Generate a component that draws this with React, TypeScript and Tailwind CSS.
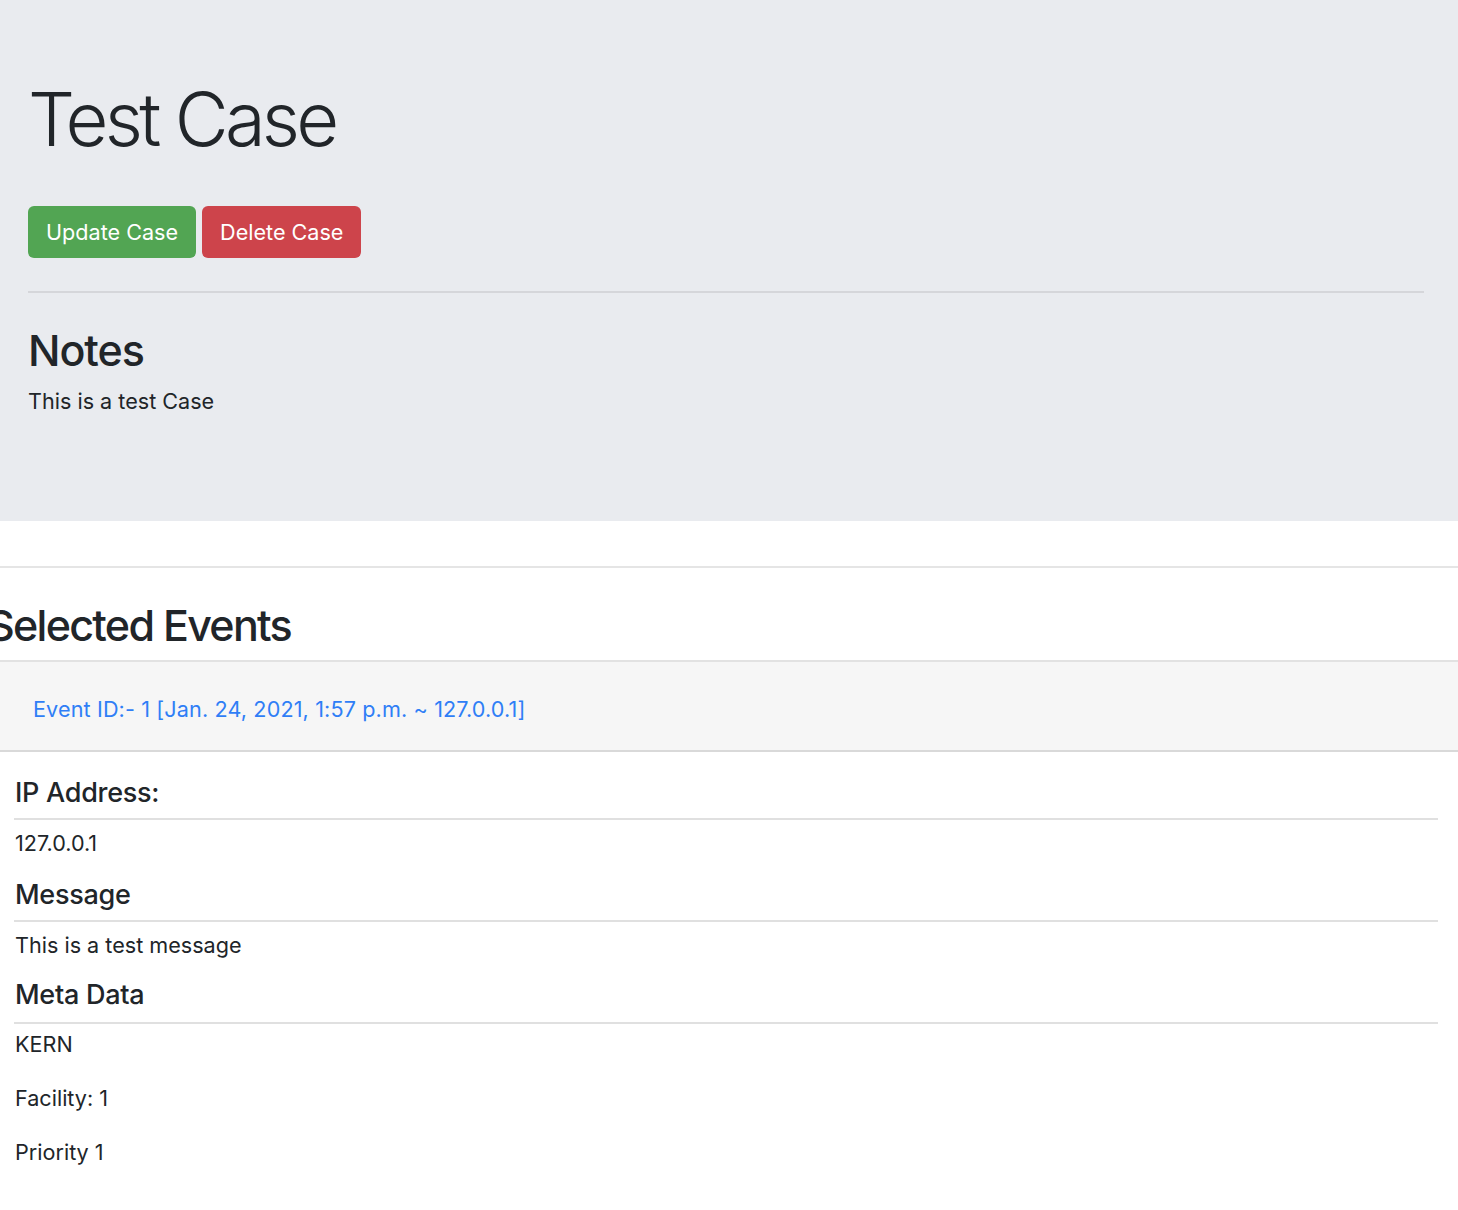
export default function App() {
  return (
    <div className="min-h-screen bg-white font-['Inter','Liberation_Sans',sans-serif] text-[#212529]">
      <section className="bg-[#e9ebef] pb-[104px] pl-[28px] pr-[34px] pt-[74px]">
        <h1 className="text-[74px] font-light leading-[1.23] tracking-[-0.05em]">Test Case</h1>
        <div className="mt-[41px] flex gap-[6px]">
          <button className="h-[52px] rounded-[6px] bg-[#52a553] px-[18px] text-[21.6px] text-white">
            Update Case
          </button>
          <button className="h-[52px] rounded-[6px] bg-[#cd444b] px-[18px] text-[21.6px] text-white">
            Delete Case
          </button>
        </div>
        <hr className="mt-[33px] border-t-2 border-[#d5d6da]" />
        <h2 className="mt-[32px] text-[43px] font-medium leading-[1.2] tracking-[-0.025em]">Notes</h2>
        <p className="mt-[8px] text-[21.6px] leading-[1.5]">This is a test Case</p>
      </section>

      <hr className="mt-[45px] border-t-2 border-[#e5e5e5]" />
      <h2 className="ml-[-13px] mt-[32px] text-[43px] font-medium leading-[1.2] tracking-[-0.04em]">
        Selected Events
      </h2>

      <div className="mt-[8px]">
        <div className="border-y-2 border-t-[#e2e2e2] border-b-[#d9d9d9] bg-[#f6f6f6] pb-[25px] pl-[33px] pt-[31px]">
          <a href="#" className="text-[21.6px] leading-[1.5] tracking-[0.006em] text-[#2f7ef6]">
            Event ID:- 1 [Jan. 24, 2021, 1:57 p.m. ~ 127.0.0.1]
          </a>
        </div>

        <div className="pl-[15px] pr-[20px] text-[21.6px] leading-[1.5]">
          <h5 className="mt-[25px] text-[27px] font-medium leading-[1.2] tracking-[-0.01em]">IP Address:</h5>
          <hr className="-ml-px mt-[9px] border-t-2 border-[#e0e0e0]" />
          <p className="mt-[7px]">127.0.0.1</p>

          <h5 className="mt-[19.6px] text-[27px] font-medium leading-[1.2] tracking-[-0.01em]">Message</h5>
          <hr className="-ml-px mt-[8.6px] border-t-2 border-[#e0e0e0]" />
          <p className="mt-[7px]">This is a test message</p>

          <h5 className="mt-[17.6px] text-[27px] font-medium leading-[1.2] tracking-[-0.01em]">Meta Data</h5>
          <hr className="-ml-px mt-[10.6px] border-t-2 border-[#e0e0e0]" />
          <p className="mt-[4px]">KERN</p>
          <p className="mt-[21.6px]">Facility: 1</p>
          <p className="mt-[21.6px]">Priority 1</p>
        </div>
      </div>
    </div>
  );
}
